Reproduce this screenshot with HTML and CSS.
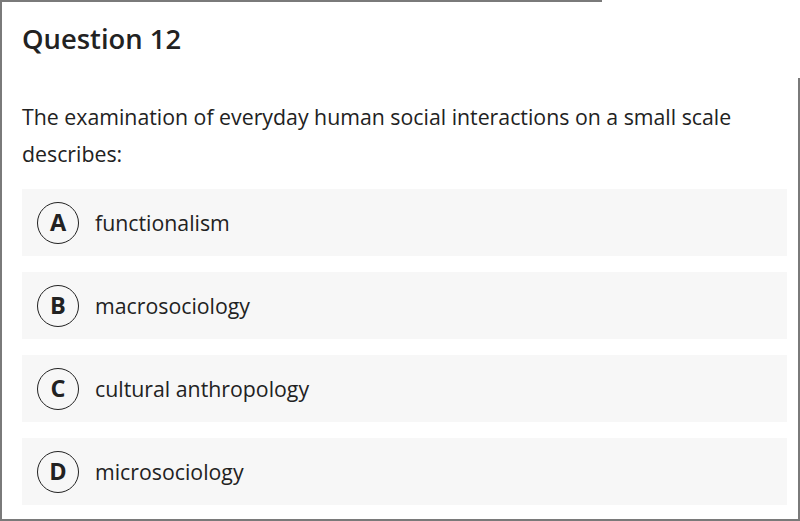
FILE: index.html
```html
<!DOCTYPE html>
<html lang="en">
<head>
    <meta charset="UTF-8">
    <meta name="viewport" content="width=device-width, initial-scale=1.0">
    <title>Question 12</title>
    <link rel="stylesheet" href="styles.css">
</head>
<body>
    <div class="frame">
        <div class="corner"></div>
        <h1 class="title">Question 12</h1>
        <p class="prompt">The examination of everyday human social interactions on a small scale describes:</p>
        <div class="options">
            <div class="option"><span class="letter">A</span><span class="label">functionalism</span></div>
            <div class="option"><span class="letter">B</span><span class="label">macrosociology</span></div>
            <div class="option"><span class="letter">C</span><span class="label">cultural anthropology</span></div>
            <div class="option"><span class="letter">D</span><span class="label">microsociology</span></div>
        </div>
    </div>
</body>
</html>
```

FILE: styles.css
```css
html, body {
    margin: 0;
    padding: 0;
    background: #ffffff;
}
.frame {
    position: relative;
    box-sizing: border-box;
    width: 800px;
    height: 521px;
    border: 2px solid #7a7a7a;
    padding: 0 11px 0 20px;
    font-family: "Open Sans", sans-serif;
    color: #222222;
}
/* white patch over the top right corner of the frame */
.corner {
    position: absolute;
    top: -2px;
    right: -2px;
    width: 198px;
    height: 78px;
    background: #ffffff;
}
.title {
    margin: 0;
    padding-top: 18px;
    font-size: 27.4px;
    font-weight: 600;
    line-height: 38px;
}
.prompt {
    margin: 0;
    padding-top: 40px;
    font-size: 21.3px;
    line-height: 37px;
}
.options {
    display: flex;
    flex-direction: column;
    gap: 16px;
    margin-top: 17px;
}
.option {
    display: flex;
    align-items: center;
    height: 67px;
    background: #f7f7f7;
    padding-left: 15px;
}
.letter {
    display: flex;
    align-items: center;
    justify-content: center;
    box-sizing: border-box;
    width: 42px;
    height: 42px;
    padding-bottom: 1px;
    border: 1.5px solid #222222;
    border-radius: 50%;
    font-size: 23.5px;
    font-weight: 700;
}
.label {
    margin-left: 16px;
    font-size: 21.3px;
}
```
